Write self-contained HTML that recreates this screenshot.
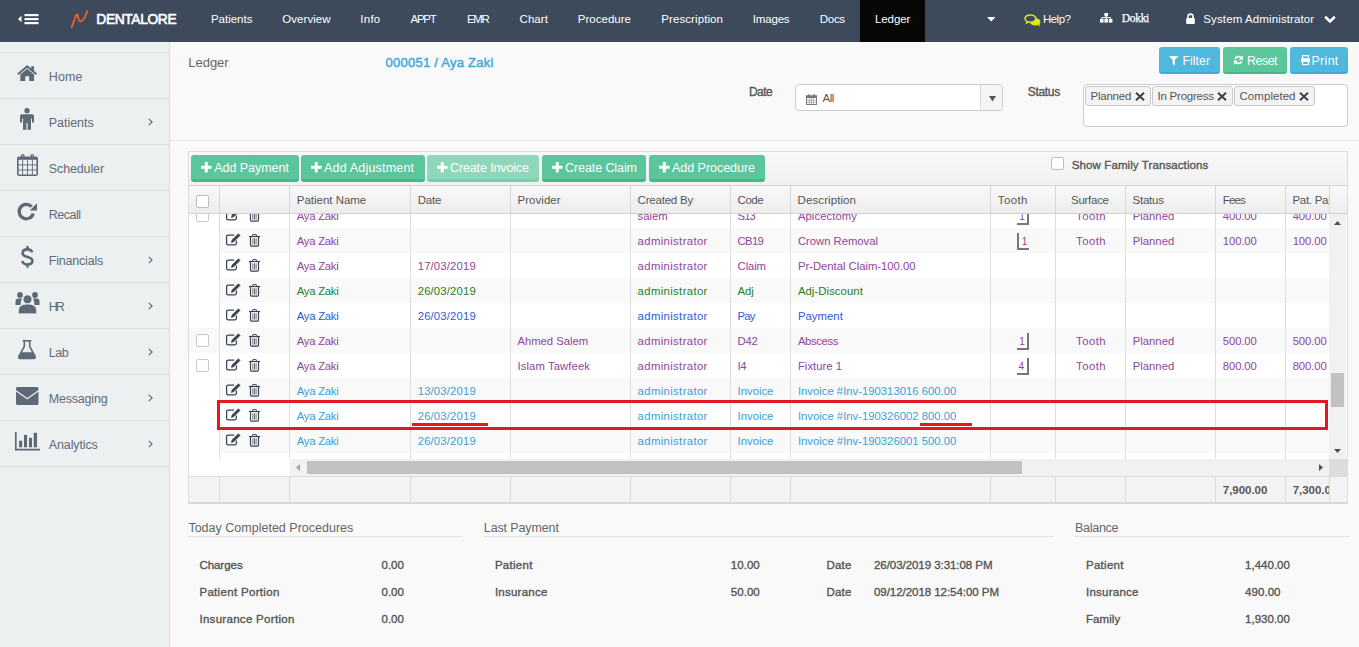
<!DOCTYPE html>
<html><head><meta charset="utf-8"><title>Ledger</title><style>
*{box-sizing:border-box;margin:0;padding:0}
html,body{width:1359px;height:647px;overflow:hidden;background:#f9f9f9;font-family:"Liberation Sans",sans-serif;font-size:12px;color:#555;position:relative}
.a{position:absolute}
.t{position:absolute;white-space:nowrap;line-height:normal}
svg{position:absolute;overflow:visible}
</style></head><body>
<div class="a" style="left:0;top:0;width:1359px;height:42px;background:#3d4a5c"></div>
<div class="a" style="left:860px;top:0;width:65px;height:42px;background:#070707"></div>
<svg style="left:18px;top:13px" width="21" height="12" viewBox="0 0 21 12">
<path d="M0 6 L3.5 2.8 L3.5 9.2 Z" fill="#fff"/>
<rect x="6.5" y="1" width="14" height="2.2" fill="#fff"/><rect x="6.5" y="5" width="14" height="2.2" fill="#fff"/><rect x="6.5" y="9" width="14" height="2.2" fill="#fff"/></svg>
<svg style="left:70px;top:10px" width="19" height="18" viewBox="0 0 19 18">
<path d="M1.8 17 L5.6 6.2 Q7 2.6 7.9 6 L8.6 9.2 Q9.6 12.4 12.2 10.8 Q14.6 9 17.2 1.2" stroke="#ef5f28" stroke-width="1.9" fill="none" stroke-linecap="round" stroke-linejoin="round"/></svg>
<div class="t" style="left:96.30px;top:12px;font-size:13.8px;color:#fff;letter-spacing:-0.369px;-webkit-text-stroke:0.6px #fff">DENTALORE</div>
<div class="t" style="left:210.90px;top:13px;font-size:11.5px;color:#fff;letter-spacing:-0.007px">Patients</div>
<div class="t" style="left:282.30px;top:13px;font-size:11.5px;color:#fff;letter-spacing:0.050px">Overview</div>
<div class="t" style="left:360.20px;top:13px;font-size:11.5px;color:#fff;letter-spacing:0.300px">Info</div>
<div class="t" style="left:410.50px;top:13px;font-size:11.5px;color:#fff;letter-spacing:-1.283px">APPT</div>
<div class="t" style="left:466.90px;top:13px;font-size:11.5px;color:#fff;letter-spacing:-1.375px">EMR</div>
<div class="t" style="left:519.50px;top:13px;font-size:11.5px;color:#fff;letter-spacing:0.075px">Chart</div>
<div class="t" style="left:577.70px;top:13px;font-size:11.5px;color:#fff;letter-spacing:0.031px">Procedure</div>
<div class="t" style="left:661.20px;top:13px;font-size:11.5px;color:#fff;letter-spacing:0.100px">Prescription</div>
<div class="t" style="left:752.80px;top:13px;font-size:11.5px;color:#fff;letter-spacing:-0.180px">Images</div>
<div class="t" style="left:819.80px;top:13px;font-size:11.5px;color:#fff;letter-spacing:-0.300px">Docs</div>
<div class="t" style="left:875.00px;top:13px;font-size:11.5px;color:#fff;letter-spacing:-0.100px">Ledger</div>
<div class="t" style="left:1042.90px;top:13px;font-size:11.5px;color:#fff;letter-spacing:-0.487px">Help?</div>
<div class="t" style="left:1203.30px;top:13px;font-size:11.5px;color:#fff;letter-spacing:0.118px">System Administrator</div>
<div class="t" style="left:1121.70px;top:12px;font-size:11.5px;color:#fff;letter-spacing:-0.287px;font-family:'Liberation Serif',serif;-webkit-text-stroke:0.25px #fff">Dokki</div>
<svg style="left:987px;top:17px" width="9" height="5" viewBox="0 0 9 5"><path d="M0 0 H8.5 L4.25 4.5Z" fill="#fff"/></svg>
<svg style="left:1024px;top:13.5px" width="17" height="13" viewBox="0 0 17 13">
<ellipse cx="11.2" cy="7.9" rx="5.2" ry="3.7" fill="#e5e619"/>
<path d="M12.5 10.5 L16 12.6 L15 9.8Z" fill="#e5e619"/>
<ellipse cx="6.4" cy="4.6" rx="5.4" ry="3.7" fill="#3d4a5c" stroke="#e5e619" stroke-width="1.5"/>
<path d="M2.6 7.4 L1.3 10.2 L5.3 8.4Z" fill="#e5e619"/></svg>
<svg style="left:1100.4px;top:13px" width="12.4" height="9.6" viewBox="0 0 12.4 9.6">
<rect x="4.4" y="0" width="3.6" height="3.3" fill="#fff"/><rect x="0" y="6" width="3.6" height="3.6" fill="#fff"/><rect x="4.4" y="6" width="3.6" height="3.6" fill="#fff"/><rect x="8.8" y="6" width="3.6" height="3.6" fill="#fff"/>
<path d="M1.8 6.2 V4.6 H10.6 V6.2 M6.2 3 V6.2" stroke="#fff" stroke-width="1" fill="none"/></svg>
<svg style="left:1186px;top:13px" width="9" height="11" viewBox="0 0 9 11">
<path d="M2 5.2 V3.6 A2.5 2.5 0 0 1 7 3.6 V5.2" stroke="#fff" stroke-width="1.6" fill="none"/><rect x="0.2" y="5" width="8.6" height="6" rx="0.8" fill="#fff"/></svg>
<svg style="left:1324px;top:15px" width="12" height="9" viewBox="0 0 12 9"><path d="M1.2 1.8 L6 6.4 L10.8 1.8" stroke="#fff" stroke-width="2.6" fill="none"/></svg>
<div class="a" style="left:0;top:42px;width:170px;height:605px;background:#ecf0f1;border-right:1px solid #dcdfe0"></div>
<div class="a" style="left:0;top:52px;width:169px;height:1px;background:#dce0e1"></div>
<div class="a" style="left:0;top:98px;width:169px;height:1px;background:#dce0e1"></div>
<div class="a" style="left:0;top:144px;width:169px;height:1px;background:#dce0e1"></div>
<div class="a" style="left:0;top:190px;width:169px;height:1px;background:#dce0e1"></div>
<div class="a" style="left:0;top:236px;width:169px;height:1px;background:#dce0e1"></div>
<div class="a" style="left:0;top:282px;width:169px;height:1px;background:#dce0e1"></div>
<div class="a" style="left:0;top:328px;width:169px;height:1px;background:#dce0e1"></div>
<div class="a" style="left:0;top:374px;width:169px;height:1px;background:#dce0e1"></div>
<div class="a" style="left:0;top:420px;width:169px;height:1px;background:#dce0e1"></div>
<div class="a" style="left:0;top:466px;width:169px;height:1px;background:#dce0e1"></div>
<div class="t" style="left:48.80px;top:70px;font-size:12.5px;color:#5f6b77;letter-spacing:0.082px">Home</div>
<div class="t" style="left:48.80px;top:116px;font-size:12.5px;color:#5f6b77;letter-spacing:-0.046px">Patients</div>
<svg style="left:148px;top:118px" width="5" height="8" viewBox="0 0 5 8"><path d="M0.8 0.8 L4 4 L0.8 7.2" stroke="#5f6b77" stroke-width="1.2" fill="none"/></svg>
<div class="t" style="left:48.80px;top:162px;font-size:12.5px;color:#5f6b77;letter-spacing:-0.129px">Scheduler</div>
<div class="t" style="left:48.80px;top:208px;font-size:12.5px;color:#5f6b77;letter-spacing:-0.509px">Recall</div>
<div class="t" style="left:48.80px;top:254px;font-size:12.5px;color:#5f6b77;letter-spacing:-0.204px">Financials</div>
<svg style="left:148px;top:256px" width="5" height="8" viewBox="0 0 5 8"><path d="M0.8 0.8 L4 4 L0.8 7.2" stroke="#5f6b77" stroke-width="1.2" fill="none"/></svg>
<div class="t" style="left:48.80px;top:300px;font-size:12.5px;color:#5f6b77;letter-spacing:-2.179px">HR</div>
<svg style="left:148px;top:302px" width="5" height="8" viewBox="0 0 5 8"><path d="M0.8 0.8 L4 4 L0.8 7.2" stroke="#5f6b77" stroke-width="1.2" fill="none"/></svg>
<div class="t" style="left:48.80px;top:346px;font-size:12.5px;color:#5f6b77;letter-spacing:-0.497px">Lab</div>
<svg style="left:148px;top:348px" width="5" height="8" viewBox="0 0 5 8"><path d="M0.8 0.8 L4 4 L0.8 7.2" stroke="#5f6b77" stroke-width="1.2" fill="none"/></svg>
<div class="t" style="left:48.80px;top:392px;font-size:12.5px;color:#5f6b77;letter-spacing:-0.201px">Messaging</div>
<svg style="left:148px;top:394px" width="5" height="8" viewBox="0 0 5 8"><path d="M0.8 0.8 L4 4 L0.8 7.2" stroke="#5f6b77" stroke-width="1.2" fill="none"/></svg>
<div class="t" style="left:48.80px;top:438px;font-size:12.5px;color:#5f6b77;letter-spacing:-0.125px">Analytics</div>
<svg style="left:148px;top:440px" width="5" height="8" viewBox="0 0 5 8"><path d="M0.8 0.8 L4 4 L0.8 7.2" stroke="#5f6b77" stroke-width="1.2" fill="none"/></svg>
<svg style="left:17px;top:65px" width="21" height="17" viewBox="0 0 21 17"><path d="M0.9 9.2 L10.2 1.4 L19.5 9.2" stroke="#5d6977" stroke-width="2" fill="none"/><path d="M3.3 9.4 L10.2 3.7 L17.1 9.4 V16 H12.2 V11.2 H8.2 V16 H3.3 Z" fill="#5d6977"/><rect x="14.2" y="1.2" width="2.8" height="5" fill="#5d6977"/></svg>
<svg style="left:20px;top:108px" width="14" height="22" viewBox="0 0 14 22"><circle cx="7" cy="2.7" r="2.6" fill="#5d6977"/><path d="M1.6 6.2 H12.4 A1.6 1.6 0 0 1 14 7.8 V14.5 H12 V10.5 H11 V21.8 H7.6 V15 H6.4 V21.8 H3 V10.5 H2 V14.5 H0 V7.8 A1.6 1.6 0 0 1 1.6 6.2Z" fill="#5d6977"/></svg>
<svg style="left:17px;top:154px" width="21" height="22" viewBox="0 0 21 22"><rect x="0.8" y="3.2" width="19.4" height="18" rx="1.4" fill="none" stroke="#5d6977" stroke-width="1.6"/><rect x="0.8" y="3.2" width="19.4" height="2.6" fill="#5d6977"/><path d="M4.6 4.5 V1.8 A1.2 1.2 0 0 1 7 1.8 V4.5 M14 4.5 V1.8 A1.2 1.2 0 0 1 16.4 1.8 V4.5" stroke="#5d6977" stroke-width="1.3" fill="none"/><path d="M5.6 6 V21 M10.5 6 V21 M15.4 6 V21 M1 10.9 H20 M1 16 H20" stroke="#5d6977" stroke-width="0.9"/></svg>
<svg style="left:17px;top:202px" width="20" height="19" viewBox="0 0 20 19"><path d="M16.3 11.5 A7.2 7.2 0 1 1 14.6 4.6" stroke="#5d6977" stroke-width="3.2" fill="none"/><path d="M20 1.2 V8.6 H12.6 Z" fill="#5d6977"/></svg>
<svg style="left:21px;top:246px" width="13" height="22" viewBox="0 0 13 22"><path d="M11.2 6.4 C10.5 4.4 8.8 3.4 6.5 3.4 C3.5 3.4 1.6 5 1.6 7.3 C1.6 12 11.4 10.2 11.4 14.8 C11.4 17 9.5 18.5 6.5 18.5 C3.5 18.5 1.8 17.1 1.2 15" stroke="#5d6977" stroke-width="2.6" fill="none"/><rect x="5.3" y="0" width="2.4" height="4" fill="#5d6977"/><rect x="5.3" y="17.6" width="2.4" height="4" fill="#5d6977"/></svg>
<svg style="left:15px;top:292px" width="25" height="22" viewBox="0 0 25 22"><circle cx="5" cy="3" r="2.9" fill="#5d6977"/><circle cx="20" cy="3" r="2.9" fill="#5d6977"/><path d="M0.5 13 V9.6 Q0.5 6.6 3.5 6.6 H7.2 Q5.2 8.6 5.6 13 Z" fill="#5d6977"/><path d="M24.5 13 V9.6 Q24.5 6.6 21.5 6.6 H17.8 Q19.8 8.6 19.4 13 Z" fill="#5d6977"/><circle cx="12.5" cy="7.3" r="4.4" fill="#5d6977" stroke="#ecf0f1" stroke-width="0.7"/><path d="M3.5 21.2 V18.5 Q3.5 12 12.5 12 Q21.5 12 21.5 18.5 V21.2 Q21.5 21.8 20.9 21.8 H4.1 Q3.5 21.8 3.5 21.2Z" fill="#5d6977" stroke="#ecf0f1" stroke-width="0.7"/></svg>
<svg style="left:18px;top:340px" width="18" height="19" viewBox="0 0 18 19"><rect x="4.7" y="0" width="8.6" height="1.6" fill="#5d6977"/><path d="M6.3 1 V6.5 L0.9 16.4 Q0.2 18.4 2.2 18.4 H15.8 Q17.8 18.4 17.1 16.4 L11.7 6.5 V1" stroke="#5d6977" stroke-width="1.6" fill="none"/><path d="M3.3 12.2 H14.7 L17.1 16.6 Q17.6 18.4 15.8 18.4 H2.2 Q0.4 18.4 0.9 16.6 Z" fill="#5d6977"/></svg>
<svg style="left:15.7px;top:386.8px" width="22.5" height="18" viewBox="0 0 22.5 18"><path d="M0 1.5 A1.5 1.5 0 0 1 1.5 0 H21 A1.5 1.5 0 0 1 22.5 1.5 V2.9 L11.25 11 L0 2.9 Z" fill="#5d6977"/><path d="M0 4.5 L11.25 12.6 L22.5 4.5 V16.5 A1.5 1.5 0 0 1 21 18 H1.5 A1.5 1.5 0 0 1 0 16.5 Z" fill="#5d6977"/></svg>
<svg style="left:15px;top:432px" width="26" height="19" viewBox="0 0 26 19"><path d="M0.8 0 V17.6 H25" stroke="#5d6977" stroke-width="1.7" fill="none"/><rect x="4.1" y="8.7" width="3.1" height="6.6" fill="#5d6977"/><rect x="9" y="2.9" width="3.1" height="12.4" fill="#5d6977"/><rect x="14" y="5.8" width="3" height="9.5" fill="#5d6977"/><rect x="18.7" y="0.8" width="3.3" height="14.5" fill="#5d6977"/></svg>
<div class="t" style="left:188.20px;top:55px;font-size:13px;color:#666;letter-spacing:0.000px">Ledger</div>
<div class="t" style="left:385.50px;top:55px;font-size:13px;color:#3daad9;letter-spacing:0.247px;-webkit-text-stroke:0.45px #3daad9">000051 / Aya Zaki</div>
<div class="a" style="left:1159px;top:47px;width:61px;height:27px;background:#4fb8dc;border-bottom:2px solid #3aaed6;border-radius:3px"></div>
<div class="a" style="left:1223px;top:47px;width:64px;height:27px;background:#5bc69b;border-bottom:2px solid #43b987;border-radius:3px"></div>
<div class="a" style="left:1290px;top:47px;width:58px;height:27px;background:#4fb8dc;border-bottom:2px solid #3aaed6;border-radius:3px"></div>
<svg style="left:1169.3px;top:55.5px" width="9.5" height="9.5" viewBox="0 0 11 11"><path d="M0 0 H11 L6.8 4.6 V11 L4.2 9.2 V4.6 Z" fill="#fff"/></svg>
<div class="t" style="left:1182.50px;top:54px;font-size:12.3px;color:#fff;letter-spacing:0.030px">Filter</div>
<svg style="left:1232.7px;top:55.3px" width="10.8" height="9.8" viewBox="0 0 11 11.5"><path d="M9.3 4.2 A4.3 4.3 0 0 0 1.6 4.6" stroke="#fff" stroke-width="2" fill="none"/><path d="M1.7 7.8 A4.3 4.3 0 0 0 9.4 7.4" stroke="#fff" stroke-width="2" fill="none"/><path d="M10.8 0.5 V5.5 H5.8Z" fill="#fff"/><path d="M0.2 11.5 V6.5 H5.2Z" fill="#fff"/></svg>
<div class="t" style="left:1247.00px;top:54px;font-size:12.3px;color:#fff;letter-spacing:-0.412px">Reset</div>
<svg style="left:1300px;top:54.8px" width="11" height="10" viewBox="0 0 12 12"><path d="M2.5 4 V0.8 H9.5 V4" stroke="#fff" stroke-width="1.5" fill="none"/><rect x="0.5" y="4" width="11" height="5" rx="1.2" fill="#fff"/><rect x="2.6" y="7.5" width="6.8" height="4" fill="#4fb8dc" stroke="#fff" stroke-width="1.4"/></svg>
<div class="t" style="left:1311.50px;top:54px;font-size:12.3px;color:#fff;letter-spacing:0.375px">Print</div>
<div class="t" style="left:748.90px;top:85px;font-size:12px;color:#555;letter-spacing:-0.483px;-webkit-text-stroke:0.35px #555">Date</div>
<div class="a" style="left:795px;top:84px;width:208px;height:27px;background:#fff;border:1px solid #ccc;border-radius:4px"></div>
<div class="a" style="left:980px;top:85px;width:22px;height:25px;background:#f5f5f5;border-left:1px solid #dadada;border-radius:0 3px 3px 0"></div>
<svg style="left:989px;top:96px" width="7" height="6" viewBox="0 0 7 6"><path d="M0 0 H7 L3.5 5.5Z" fill="#555"/></svg>
<svg style="left:806px;top:94px" width="11" height="11" viewBox="0 0 11 11"><rect x="0.5" y="1.8" width="10" height="8.7" fill="none" stroke="#777" stroke-width="1"/><rect x="0.5" y="1.8" width="10" height="2.2" fill="#777"/><path d="M2.8 0 V3 M8.2 0 V3" stroke="#777" stroke-width="1.2"/><path d="M3.5 4 V10.5 M5.5 4 V10.5 M7.5 4 V10.5 M0.5 6.2 H10.5 M0.5 8.3 H10.5" stroke="#999" stroke-width="0.7"/></svg>
<div class="t" style="left:822.50px;top:92px;font-size:11.5px;color:#555;letter-spacing:-0.450px">All</div>
<div class="t" style="left:1027.70px;top:85px;font-size:12px;color:#555;letter-spacing:-0.300px;-webkit-text-stroke:0.35px #555">Status</div>
<div class="a" style="left:1083px;top:84px;width:265px;height:43px;background:#fff;border:1px solid #ccc;border-radius:4px"></div>
<div class="a" style="left:1085px;top:86px;width:66px;height:20px;background:#f3f3f3;border:1px solid #c9c9c9;border-radius:3px"></div>
<div class="t" style="left:1090.60px;top:90px;font-size:11.5px;color:#555;letter-spacing:-0.250px">Planned</div>
<svg style="left:1134.8px;top:92px" width="10" height="9" viewBox="0 0 10 9"><path d="M1 0.8 L9 8.2 M9 0.8 L1 8.2" stroke="#3a3f48" stroke-width="2"/></svg>
<div class="a" style="left:1152px;top:86px;width:81px;height:20px;background:#f3f3f3;border:1px solid #c9c9c9;border-radius:3px"></div>
<div class="t" style="left:1157.50px;top:90px;font-size:11.5px;color:#555;letter-spacing:-0.230px">In Progress</div>
<svg style="left:1216.5px;top:92px" width="10" height="9" viewBox="0 0 10 9"><path d="M1 0.8 L9 8.2 M9 0.8 L1 8.2" stroke="#3a3f48" stroke-width="2"/></svg>
<div class="a" style="left:1234px;top:86px;width:81px;height:20px;background:#f3f3f3;border:1px solid #c9c9c9;border-radius:3px"></div>
<div class="t" style="left:1239.50px;top:90px;font-size:11.5px;color:#555;letter-spacing:0.050px">Completed</div>
<svg style="left:1298.5px;top:92px" width="10" height="9" viewBox="0 0 10 9"><path d="M1 0.8 L9 8.2 M9 0.8 L1 8.2" stroke="#3a3f48" stroke-width="2"/></svg>
<div class="a" style="left:170px;top:140px;width:1189px;height:1px;background:#e6e6e6"></div>
<div class="a" style="left:188px;top:151px;width:1160px;height:353px;background:#fff;border:1px solid #dcdcdc;border-bottom:2px solid #d8d8d8"></div>
<div class="a" style="left:189px;top:152px;width:1158px;height:33px;background:linear-gradient(#f8f8f8,#f1f1f1)"></div>
<div class="a" style="left:189px;top:185px;width:1158px;height:1px;background:#d4d4d4"></div>
<div class="a" style="left:191px;top:155px;width:108px;height:27px;background:#5bc69b;border-bottom:3px solid #43b987;border-radius:3px"></div>
<svg style="left:201.3px;top:162px" width="10.5" height="10.5" viewBox="0 0 10.5 10.5"><path d="M5.25 0 V10.5 M0 5.25 H10.5" stroke="#fff" stroke-width="3"/></svg>
<div class="t" style="left:214.30px;top:161px;font-size:12.5px;color:#fff;letter-spacing:-0.055px">Add Payment</div>
<div class="a" style="left:301px;top:155px;width:124px;height:27px;background:#5bc69b;border-bottom:3px solid #43b987;border-radius:3px"></div>
<svg style="left:311.0px;top:162px" width="10.5" height="10.5" viewBox="0 0 10.5 10.5"><path d="M5.25 0 V10.5 M0 5.25 H10.5" stroke="#fff" stroke-width="3"/></svg>
<div class="t" style="left:324.00px;top:161px;font-size:12.5px;color:#fff;letter-spacing:0.188px">Add Adjustment</div>
<div class="a" style="left:427px;top:155px;width:112px;height:27px;background:#8fd7ba;border-bottom:3px solid #7ccfac;border-radius:3px"></div>
<svg style="left:437.0px;top:162px" width="10.5" height="10.5" viewBox="0 0 10.5 10.5"><path d="M5.25 0 V10.5 M0 5.25 H10.5" stroke="#fff" stroke-width="3"/></svg>
<div class="t" style="left:450.00px;top:161px;font-size:12.5px;color:#fff;letter-spacing:-0.123px">Create Invoice</div>
<div class="a" style="left:542px;top:155px;width:104px;height:27px;background:#5bc69b;border-bottom:3px solid #43b987;border-radius:3px"></div>
<svg style="left:552.0px;top:162px" width="10.5" height="10.5" viewBox="0 0 10.5 10.5"><path d="M5.25 0 V10.5 M0 5.25 H10.5" stroke="#fff" stroke-width="3"/></svg>
<div class="t" style="left:565.00px;top:161px;font-size:12.5px;color:#fff;letter-spacing:-0.086px">Create Claim</div>
<div class="a" style="left:649px;top:155px;width:116px;height:27px;background:#5bc69b;border-bottom:3px solid #43b987;border-radius:3px"></div>
<svg style="left:659.0px;top:162px" width="10.5" height="10.5" viewBox="0 0 10.5 10.5"><path d="M5.25 0 V10.5 M0 5.25 H10.5" stroke="#fff" stroke-width="3"/></svg>
<div class="t" style="left:672.00px;top:161px;font-size:12.5px;color:#fff;letter-spacing:-0.033px">Add Procedure</div>
<div class="a" style="left:1051px;top:157px;width:13px;height:13px;background:#fff;border:1px solid #bdbdbd;border-radius:2px"></div>
<div class="t" style="left:1071.80px;top:159px;font-size:11.5px;color:#555;letter-spacing:0.100px;-webkit-text-stroke:0.35px #555">Show Family Transactions</div>
<div class="a" style="left:189px;top:186px;width:1158px;height:27px;background:linear-gradient(#f9f9f9,#ededed)"></div>
<div class="a" style="left:189px;top:213px;width:1158px;height:1px;background:#d0d0d0"></div>
<div class="a" style="left:219px;top:186px;width:1px;height:27px;background:#d6d6d6"></div>
<div class="a" style="left:289px;top:186px;width:1px;height:27px;background:#d6d6d6"></div>
<div class="a" style="left:410px;top:186px;width:1px;height:27px;background:#d6d6d6"></div>
<div class="a" style="left:510px;top:186px;width:1px;height:27px;background:#d6d6d6"></div>
<div class="a" style="left:630px;top:186px;width:1px;height:27px;background:#d6d6d6"></div>
<div class="a" style="left:730px;top:186px;width:1px;height:27px;background:#d6d6d6"></div>
<div class="a" style="left:790px;top:186px;width:1px;height:27px;background:#d6d6d6"></div>
<div class="a" style="left:990px;top:186px;width:1px;height:27px;background:#d6d6d6"></div>
<div class="a" style="left:1055px;top:186px;width:1px;height:27px;background:#d6d6d6"></div>
<div class="a" style="left:1125px;top:186px;width:1px;height:27px;background:#d6d6d6"></div>
<div class="a" style="left:1215px;top:186px;width:1px;height:27px;background:#d6d6d6"></div>
<div class="a" style="left:1285px;top:186px;width:1px;height:27px;background:#d6d6d6"></div>
<div class="a" style="left:1329px;top:186px;width:1px;height:27px;background:#d6d6d6"></div>
<div class="a" style="left:196px;top:195px;width:13px;height:13px;background:#fff;border:1px solid #bdbdbd;border-radius:2px"></div>
<div class="t" style="left:296.80px;top:194px;font-size:11.5px;color:#555;letter-spacing:-0.020px">Patient Name</div>
<div class="t" style="left:417.70px;top:194px;font-size:11.5px;color:#555;letter-spacing:-0.170px">Date</div>
<div class="t" style="left:517.50px;top:194px;font-size:11.5px;color:#555;letter-spacing:0.036px">Provider</div>
<div class="t" style="left:637.60px;top:194px;font-size:11.5px;color:#555;letter-spacing:-0.214px">Created By</div>
<div class="t" style="left:737.60px;top:194px;font-size:11.5px;color:#555;letter-spacing:-0.468px">Code</div>
<div class="t" style="left:797.60px;top:194px;font-size:11.5px;color:#555;letter-spacing:0.085px">Description</div>
<div class="t" style="left:997.80px;top:194px;font-size:11.5px;color:#555;letter-spacing:0.370px">Tooth</div>
<div class="t" style="left:1071.00px;top:194px;font-size:11.5px;color:#555;letter-spacing:-0.271px">Surface</div>
<div class="t" style="left:1132.50px;top:194px;font-size:11.5px;color:#555;letter-spacing:-0.237px">Status</div>
<div class="t" style="left:1222.80px;top:194px;font-size:11.5px;color:#555;letter-spacing:-0.894px">Fees</div>
<div class="a" style="left:1286px;top:186px;width:43px;height:27px;overflow:hidden"><div class="t" style="left:6.50px;top:8px;font-size:11.5px;color:#555;letter-spacing:-0.297px">Pat. Paid</div>
</div>
<div class="a" style="left:189px;top:214px;width:1140px;height:245px;overflow:hidden;background:#fff">
<div class="t" style="left:107.80px;top:-4px;font-size:11.3px;color:#91469a;letter-spacing:-0.253px">Aya Zaki</div>
<div class="t" style="left:448.60px;top:-4px;font-size:11.3px;color:#91469a;letter-spacing:0.000px">salem</div>
<div class="t" style="left:548.60px;top:-4px;font-size:11.3px;color:#91469a;letter-spacing:-0.996px">S13</div>
<div class="t" style="left:608.90px;top:-4px;font-size:11.3px;color:#91469a;letter-spacing:0.068px">Apicectomy</div>
<div class="t" style="left:887.00px;top:-4px;font-size:11.3px;color:#91469a;letter-spacing:0.495px">Tooth</div>
<div class="t" style="left:943.70px;top:-4px;font-size:11.3px;color:#91469a;letter-spacing:0.015px">Planned</div>
<div class="t" style="left:1033.80px;top:-4px;font-size:11.3px;color:#91469a;letter-spacing:-0.115px">400.00</div>
<div class="t" style="left:1103.70px;top:-4px;font-size:11.3px;color:#91469a;letter-spacing:-0.115px">400.00</div>
<div class="a" style="left:838px;top:-6px;width:2px;height:17px;background:#777"></div>
<div class="a" style="left:828px;top:9px;width:12px;height:2px;background:#777"></div>
<div class="t" style="left:830.30px;top:-3px;font-size:10px;color:#91469a;letter-spacing:0.000px">1</div>
<svg style="left:37px;top:-6.3px" width="15" height="13" viewBox="0 0 15 13"><path d="M8.2 2 H2.2 A1.6 1.6 0 0 0 0.6 3.6 V10.2 A1.6 1.6 0 0 0 2.2 11.8 H8.8 A1.6 1.6 0 0 0 10.4 10.2 V7.6" stroke="#3b4350" stroke-width="1.25" fill="none"/><path d="M12.4 0.7 L14.1 2.4 L7.7 8.8 L5.4 9.5 L6 7.1 Z" fill="#3b4350" stroke="#3b4350" stroke-width="0.6" stroke-linejoin="round"/></svg>
<svg style="left:60.099999999999994px;top:-5.3px" width="11" height="13" viewBox="0 0 11 13"><path d="M0 2.5 H11" stroke="#3b4350" stroke-width="1.2"/><path d="M3.6 2.2 V1.1 Q3.6 0.5 4.2 0.5 H6.8 Q7.4 0.5 7.4 1.1 V2.2" stroke="#3b4350" stroke-width="1" fill="none"/><path d="M1.5 2.8 V11.1 A1 1 0 0 0 2.5 12.1 H8.5 A1 1 0 0 0 9.5 11.1 V2.8" stroke="#3b4350" stroke-width="1.2" fill="none"/><path d="M3.9 4.3 V10.6 M5.5 4.3 V10.6 M7.1 4.3 V10.6" stroke="#3b4350" stroke-width="0.75"/></svg>
<div class="a" style="left:7px;top:-5px;width:13px;height:13px;background:#fff;border:1px solid #c8c8c8;border-radius:2px"></div>
<div class="a" style="left:31px;top:14px;width:1109px;height:25px;background:#f9f9f9"></div>
<div class="t" style="left:107.80px;top:21px;font-size:11.3px;color:#91469a;letter-spacing:-0.253px">Aya Zaki</div>
<div class="t" style="left:448.60px;top:21px;font-size:11.3px;color:#91469a;letter-spacing:0.372px">administrator</div>
<div class="t" style="left:548.60px;top:21px;font-size:11.3px;color:#91469a;letter-spacing:-0.668px">CB19</div>
<div class="t" style="left:608.90px;top:21px;font-size:11.3px;color:#91469a;letter-spacing:-0.025px">Crown Removal</div>
<div class="t" style="left:887.00px;top:21px;font-size:11.3px;color:#91469a;letter-spacing:0.495px">Tooth</div>
<div class="t" style="left:943.70px;top:21px;font-size:11.3px;color:#91469a;letter-spacing:0.015px">Planned</div>
<div class="t" style="left:1033.80px;top:21px;font-size:11.3px;color:#91469a;letter-spacing:-0.115px">100.00</div>
<div class="t" style="left:1103.70px;top:21px;font-size:11.3px;color:#91469a;letter-spacing:-0.115px">100.00</div>
<div class="a" style="left:828px;top:19px;width:2px;height:17px;background:#777"></div>
<div class="a" style="left:828px;top:34px;width:12px;height:2px;background:#777"></div>
<div class="t" style="left:832.80px;top:22px;font-size:10px;color:#91469a;letter-spacing:0.000px">1</div>
<svg style="left:37px;top:18.7px" width="15" height="13" viewBox="0 0 15 13"><path d="M8.2 2 H2.2 A1.6 1.6 0 0 0 0.6 3.6 V10.2 A1.6 1.6 0 0 0 2.2 11.8 H8.8 A1.6 1.6 0 0 0 10.4 10.2 V7.6" stroke="#3b4350" stroke-width="1.25" fill="none"/><path d="M12.4 0.7 L14.1 2.4 L7.7 8.8 L5.4 9.5 L6 7.1 Z" fill="#3b4350" stroke="#3b4350" stroke-width="0.6" stroke-linejoin="round"/></svg>
<svg style="left:60.099999999999994px;top:19.7px" width="11" height="13" viewBox="0 0 11 13"><path d="M0 2.5 H11" stroke="#3b4350" stroke-width="1.2"/><path d="M3.6 2.2 V1.1 Q3.6 0.5 4.2 0.5 H6.8 Q7.4 0.5 7.4 1.1 V2.2" stroke="#3b4350" stroke-width="1" fill="none"/><path d="M1.5 2.8 V11.1 A1 1 0 0 0 2.5 12.1 H8.5 A1 1 0 0 0 9.5 11.1 V2.8" stroke="#3b4350" stroke-width="1.2" fill="none"/><path d="M3.9 4.3 V10.6 M5.5 4.3 V10.6 M7.1 4.3 V10.6" stroke="#3b4350" stroke-width="0.75"/></svg>
<div class="t" style="left:107.80px;top:46px;font-size:11.3px;color:#91469a;letter-spacing:-0.253px">Aya Zaki</div>
<div class="t" style="left:228.70px;top:46px;font-size:11.3px;color:#91469a;letter-spacing:0.161px">17/03/2019</div>
<div class="t" style="left:448.60px;top:46px;font-size:11.3px;color:#91469a;letter-spacing:0.372px">administrator</div>
<div class="t" style="left:548.60px;top:46px;font-size:11.3px;color:#91469a;letter-spacing:-0.112px">Claim</div>
<div class="t" style="left:608.90px;top:46px;font-size:11.3px;color:#91469a;letter-spacing:-0.021px">Pr-Dental Claim-100.00</div>
<svg style="left:37px;top:43.7px" width="15" height="13" viewBox="0 0 15 13"><path d="M8.2 2 H2.2 A1.6 1.6 0 0 0 0.6 3.6 V10.2 A1.6 1.6 0 0 0 2.2 11.8 H8.8 A1.6 1.6 0 0 0 10.4 10.2 V7.6" stroke="#3b4350" stroke-width="1.25" fill="none"/><path d="M12.4 0.7 L14.1 2.4 L7.7 8.8 L5.4 9.5 L6 7.1 Z" fill="#3b4350" stroke="#3b4350" stroke-width="0.6" stroke-linejoin="round"/></svg>
<svg style="left:60.099999999999994px;top:44.7px" width="11" height="13" viewBox="0 0 11 13"><path d="M0 2.5 H11" stroke="#3b4350" stroke-width="1.2"/><path d="M3.6 2.2 V1.1 Q3.6 0.5 4.2 0.5 H6.8 Q7.4 0.5 7.4 1.1 V2.2" stroke="#3b4350" stroke-width="1" fill="none"/><path d="M1.5 2.8 V11.1 A1 1 0 0 0 2.5 12.1 H8.5 A1 1 0 0 0 9.5 11.1 V2.8" stroke="#3b4350" stroke-width="1.2" fill="none"/><path d="M3.9 4.3 V10.6 M5.5 4.3 V10.6 M7.1 4.3 V10.6" stroke="#3b4350" stroke-width="0.75"/></svg>
<div class="a" style="left:31px;top:64px;width:1109px;height:25px;background:#f9f9f9"></div>
<div class="t" style="left:107.80px;top:71px;font-size:11.3px;color:#1f7f1f;letter-spacing:-0.253px">Aya Zaki</div>
<div class="t" style="left:228.70px;top:71px;font-size:11.3px;color:#1f7f1f;letter-spacing:0.161px">26/03/2019</div>
<div class="t" style="left:448.60px;top:71px;font-size:11.3px;color:#1f7f1f;letter-spacing:0.372px">administrator</div>
<div class="t" style="left:548.60px;top:71px;font-size:11.3px;color:#1f7f1f;letter-spacing:-0.133px">Adj</div>
<div class="t" style="left:608.90px;top:71px;font-size:11.3px;color:#1f7f1f;letter-spacing:0.081px">Adj-Discount</div>
<svg style="left:37px;top:68.7px" width="15" height="13" viewBox="0 0 15 13"><path d="M8.2 2 H2.2 A1.6 1.6 0 0 0 0.6 3.6 V10.2 A1.6 1.6 0 0 0 2.2 11.8 H8.8 A1.6 1.6 0 0 0 10.4 10.2 V7.6" stroke="#3b4350" stroke-width="1.25" fill="none"/><path d="M12.4 0.7 L14.1 2.4 L7.7 8.8 L5.4 9.5 L6 7.1 Z" fill="#3b4350" stroke="#3b4350" stroke-width="0.6" stroke-linejoin="round"/></svg>
<svg style="left:60.099999999999994px;top:69.7px" width="11" height="13" viewBox="0 0 11 13"><path d="M0 2.5 H11" stroke="#3b4350" stroke-width="1.2"/><path d="M3.6 2.2 V1.1 Q3.6 0.5 4.2 0.5 H6.8 Q7.4 0.5 7.4 1.1 V2.2" stroke="#3b4350" stroke-width="1" fill="none"/><path d="M1.5 2.8 V11.1 A1 1 0 0 0 2.5 12.1 H8.5 A1 1 0 0 0 9.5 11.1 V2.8" stroke="#3b4350" stroke-width="1.2" fill="none"/><path d="M3.9 4.3 V10.6 M5.5 4.3 V10.6 M7.1 4.3 V10.6" stroke="#3b4350" stroke-width="0.75"/></svg>
<div class="t" style="left:107.80px;top:96px;font-size:11.3px;color:#2f5bd5;letter-spacing:-0.253px">Aya Zaki</div>
<div class="t" style="left:228.70px;top:96px;font-size:11.3px;color:#2f5bd5;letter-spacing:0.161px">26/03/2019</div>
<div class="t" style="left:448.60px;top:96px;font-size:11.3px;color:#2f5bd5;letter-spacing:0.372px">administrator</div>
<div class="t" style="left:548.60px;top:96px;font-size:11.3px;color:#2f5bd5;letter-spacing:-0.794px">Pay</div>
<div class="t" style="left:608.90px;top:96px;font-size:11.3px;color:#2f5bd5;letter-spacing:0.050px">Payment</div>
<svg style="left:37px;top:93.7px" width="15" height="13" viewBox="0 0 15 13"><path d="M8.2 2 H2.2 A1.6 1.6 0 0 0 0.6 3.6 V10.2 A1.6 1.6 0 0 0 2.2 11.8 H8.8 A1.6 1.6 0 0 0 10.4 10.2 V7.6" stroke="#3b4350" stroke-width="1.25" fill="none"/><path d="M12.4 0.7 L14.1 2.4 L7.7 8.8 L5.4 9.5 L6 7.1 Z" fill="#3b4350" stroke="#3b4350" stroke-width="0.6" stroke-linejoin="round"/></svg>
<svg style="left:60.099999999999994px;top:94.7px" width="11" height="13" viewBox="0 0 11 13"><path d="M0 2.5 H11" stroke="#3b4350" stroke-width="1.2"/><path d="M3.6 2.2 V1.1 Q3.6 0.5 4.2 0.5 H6.8 Q7.4 0.5 7.4 1.1 V2.2" stroke="#3b4350" stroke-width="1" fill="none"/><path d="M1.5 2.8 V11.1 A1 1 0 0 0 2.5 12.1 H8.5 A1 1 0 0 0 9.5 11.1 V2.8" stroke="#3b4350" stroke-width="1.2" fill="none"/><path d="M3.9 4.3 V10.6 M5.5 4.3 V10.6 M7.1 4.3 V10.6" stroke="#3b4350" stroke-width="0.75"/></svg>
<div class="a" style="left:0px;top:114px;width:1140px;height:25px;background:#f9f9f9"></div>
<div class="t" style="left:107.80px;top:121px;font-size:11.3px;color:#91469a;letter-spacing:-0.253px">Aya Zaki</div>
<div class="t" style="left:328.50px;top:121px;font-size:11.3px;color:#91469a;letter-spacing:-0.040px">Ahmed Salem</div>
<div class="t" style="left:448.60px;top:121px;font-size:11.3px;color:#91469a;letter-spacing:0.372px">administrator</div>
<div class="t" style="left:548.60px;top:121px;font-size:11.3px;color:#91469a;letter-spacing:-0.276px">D42</div>
<div class="t" style="left:608.90px;top:121px;font-size:11.3px;color:#91469a;letter-spacing:-0.375px">Abscess</div>
<div class="t" style="left:887.00px;top:121px;font-size:11.3px;color:#91469a;letter-spacing:0.495px">Tooth</div>
<div class="t" style="left:943.70px;top:121px;font-size:11.3px;color:#91469a;letter-spacing:0.015px">Planned</div>
<div class="t" style="left:1033.80px;top:121px;font-size:11.3px;color:#91469a;letter-spacing:-0.115px">500.00</div>
<div class="t" style="left:1103.70px;top:121px;font-size:11.3px;color:#91469a;letter-spacing:-0.115px">500.00</div>
<div class="a" style="left:838px;top:119px;width:2px;height:17px;background:#777"></div>
<div class="a" style="left:828px;top:134px;width:12px;height:2px;background:#777"></div>
<div class="t" style="left:830.30px;top:122px;font-size:10px;color:#91469a;letter-spacing:0.000px">1</div>
<svg style="left:37px;top:118.7px" width="15" height="13" viewBox="0 0 15 13"><path d="M8.2 2 H2.2 A1.6 1.6 0 0 0 0.6 3.6 V10.2 A1.6 1.6 0 0 0 2.2 11.8 H8.8 A1.6 1.6 0 0 0 10.4 10.2 V7.6" stroke="#3b4350" stroke-width="1.25" fill="none"/><path d="M12.4 0.7 L14.1 2.4 L7.7 8.8 L5.4 9.5 L6 7.1 Z" fill="#3b4350" stroke="#3b4350" stroke-width="0.6" stroke-linejoin="round"/></svg>
<svg style="left:60.099999999999994px;top:119.7px" width="11" height="13" viewBox="0 0 11 13"><path d="M0 2.5 H11" stroke="#3b4350" stroke-width="1.2"/><path d="M3.6 2.2 V1.1 Q3.6 0.5 4.2 0.5 H6.8 Q7.4 0.5 7.4 1.1 V2.2" stroke="#3b4350" stroke-width="1" fill="none"/><path d="M1.5 2.8 V11.1 A1 1 0 0 0 2.5 12.1 H8.5 A1 1 0 0 0 9.5 11.1 V2.8" stroke="#3b4350" stroke-width="1.2" fill="none"/><path d="M3.9 4.3 V10.6 M5.5 4.3 V10.6 M7.1 4.3 V10.6" stroke="#3b4350" stroke-width="0.75"/></svg>
<div class="a" style="left:7px;top:120px;width:13px;height:13px;background:#fff;border:1px solid #c8c8c8;border-radius:2px"></div>
<div class="t" style="left:107.80px;top:146px;font-size:11.3px;color:#91469a;letter-spacing:-0.253px">Aya Zaki</div>
<div class="t" style="left:328.50px;top:146px;font-size:11.3px;color:#91469a;letter-spacing:0.090px">Islam Tawfeek</div>
<div class="t" style="left:448.60px;top:146px;font-size:11.3px;color:#91469a;letter-spacing:0.372px">administrator</div>
<div class="t" style="left:548.60px;top:146px;font-size:11.3px;color:#91469a;letter-spacing:-0.444px">I4</div>
<div class="t" style="left:608.90px;top:146px;font-size:11.3px;color:#91469a;letter-spacing:0.040px">Fixture 1</div>
<div class="t" style="left:887.00px;top:146px;font-size:11.3px;color:#91469a;letter-spacing:0.495px">Tooth</div>
<div class="t" style="left:943.70px;top:146px;font-size:11.3px;color:#91469a;letter-spacing:0.015px">Planned</div>
<div class="t" style="left:1033.80px;top:146px;font-size:11.3px;color:#91469a;letter-spacing:-0.115px">800.00</div>
<div class="t" style="left:1103.70px;top:146px;font-size:11.3px;color:#91469a;letter-spacing:-0.115px">800.00</div>
<div class="a" style="left:838px;top:144px;width:2px;height:17px;background:#777"></div>
<div class="a" style="left:828px;top:159px;width:12px;height:2px;background:#777"></div>
<div class="t" style="left:829.60px;top:147px;font-size:10px;color:#91469a;letter-spacing:0.000px">4</div>
<svg style="left:37px;top:143.7px" width="15" height="13" viewBox="0 0 15 13"><path d="M8.2 2 H2.2 A1.6 1.6 0 0 0 0.6 3.6 V10.2 A1.6 1.6 0 0 0 2.2 11.8 H8.8 A1.6 1.6 0 0 0 10.4 10.2 V7.6" stroke="#3b4350" stroke-width="1.25" fill="none"/><path d="M12.4 0.7 L14.1 2.4 L7.7 8.8 L5.4 9.5 L6 7.1 Z" fill="#3b4350" stroke="#3b4350" stroke-width="0.6" stroke-linejoin="round"/></svg>
<svg style="left:60.099999999999994px;top:144.7px" width="11" height="13" viewBox="0 0 11 13"><path d="M0 2.5 H11" stroke="#3b4350" stroke-width="1.2"/><path d="M3.6 2.2 V1.1 Q3.6 0.5 4.2 0.5 H6.8 Q7.4 0.5 7.4 1.1 V2.2" stroke="#3b4350" stroke-width="1" fill="none"/><path d="M1.5 2.8 V11.1 A1 1 0 0 0 2.5 12.1 H8.5 A1 1 0 0 0 9.5 11.1 V2.8" stroke="#3b4350" stroke-width="1.2" fill="none"/><path d="M3.9 4.3 V10.6 M5.5 4.3 V10.6 M7.1 4.3 V10.6" stroke="#3b4350" stroke-width="0.75"/></svg>
<div class="a" style="left:7px;top:145px;width:13px;height:13px;background:#fff;border:1px solid #c8c8c8;border-radius:2px"></div>
<div class="a" style="left:31px;top:164px;width:1109px;height:25px;background:#f9f9f9"></div>
<div class="t" style="left:107.80px;top:171px;font-size:11.3px;color:#3a9fd6;letter-spacing:-0.253px">Aya Zaki</div>
<div class="t" style="left:228.70px;top:171px;font-size:11.3px;color:#3a9fd6;letter-spacing:0.161px">13/03/2019</div>
<div class="t" style="left:448.60px;top:171px;font-size:11.3px;color:#3a9fd6;letter-spacing:0.372px">administrator</div>
<div class="t" style="left:548.60px;top:171px;font-size:11.3px;color:#3a9fd6;letter-spacing:-0.006px">Invoice</div>
<div class="t" style="left:608.90px;top:171px;font-size:11.3px;color:#3a9fd6;letter-spacing:0.003px">Invoice #Inv-190313016 600.00</div>
<svg style="left:37px;top:168.7px" width="15" height="13" viewBox="0 0 15 13"><path d="M8.2 2 H2.2 A1.6 1.6 0 0 0 0.6 3.6 V10.2 A1.6 1.6 0 0 0 2.2 11.8 H8.8 A1.6 1.6 0 0 0 10.4 10.2 V7.6" stroke="#3b4350" stroke-width="1.25" fill="none"/><path d="M12.4 0.7 L14.1 2.4 L7.7 8.8 L5.4 9.5 L6 7.1 Z" fill="#3b4350" stroke="#3b4350" stroke-width="0.6" stroke-linejoin="round"/></svg>
<svg style="left:60.099999999999994px;top:169.7px" width="11" height="13" viewBox="0 0 11 13"><path d="M0 2.5 H11" stroke="#3b4350" stroke-width="1.2"/><path d="M3.6 2.2 V1.1 Q3.6 0.5 4.2 0.5 H6.8 Q7.4 0.5 7.4 1.1 V2.2" stroke="#3b4350" stroke-width="1" fill="none"/><path d="M1.5 2.8 V11.1 A1 1 0 0 0 2.5 12.1 H8.5 A1 1 0 0 0 9.5 11.1 V2.8" stroke="#3b4350" stroke-width="1.2" fill="none"/><path d="M3.9 4.3 V10.6 M5.5 4.3 V10.6 M7.1 4.3 V10.6" stroke="#3b4350" stroke-width="0.75"/></svg>
<div class="t" style="left:107.80px;top:196px;font-size:11.3px;color:#3a9fd6;letter-spacing:-0.253px">Aya Zaki</div>
<div class="t" style="left:228.70px;top:196px;font-size:11.3px;color:#3a9fd6;letter-spacing:0.161px">26/03/2019</div>
<div class="t" style="left:448.60px;top:196px;font-size:11.3px;color:#3a9fd6;letter-spacing:0.372px">administrator</div>
<div class="t" style="left:548.60px;top:196px;font-size:11.3px;color:#3a9fd6;letter-spacing:-0.006px">Invoice</div>
<div class="t" style="left:608.90px;top:196px;font-size:11.3px;color:#3a9fd6;letter-spacing:0.003px">Invoice #Inv-190326002 800.00</div>
<svg style="left:37px;top:193.7px" width="15" height="13" viewBox="0 0 15 13"><path d="M8.2 2 H2.2 A1.6 1.6 0 0 0 0.6 3.6 V10.2 A1.6 1.6 0 0 0 2.2 11.8 H8.8 A1.6 1.6 0 0 0 10.4 10.2 V7.6" stroke="#3b4350" stroke-width="1.25" fill="none"/><path d="M12.4 0.7 L14.1 2.4 L7.7 8.8 L5.4 9.5 L6 7.1 Z" fill="#3b4350" stroke="#3b4350" stroke-width="0.6" stroke-linejoin="round"/></svg>
<svg style="left:60.099999999999994px;top:194.7px" width="11" height="13" viewBox="0 0 11 13"><path d="M0 2.5 H11" stroke="#3b4350" stroke-width="1.2"/><path d="M3.6 2.2 V1.1 Q3.6 0.5 4.2 0.5 H6.8 Q7.4 0.5 7.4 1.1 V2.2" stroke="#3b4350" stroke-width="1" fill="none"/><path d="M1.5 2.8 V11.1 A1 1 0 0 0 2.5 12.1 H8.5 A1 1 0 0 0 9.5 11.1 V2.8" stroke="#3b4350" stroke-width="1.2" fill="none"/><path d="M3.9 4.3 V10.6 M5.5 4.3 V10.6 M7.1 4.3 V10.6" stroke="#3b4350" stroke-width="0.75"/></svg>
<div class="a" style="left:31px;top:214px;width:1109px;height:25px;background:#f9f9f9"></div>
<div class="t" style="left:107.80px;top:221px;font-size:11.3px;color:#3a9fd6;letter-spacing:-0.253px">Aya Zaki</div>
<div class="t" style="left:228.70px;top:221px;font-size:11.3px;color:#3a9fd6;letter-spacing:0.161px">26/03/2019</div>
<div class="t" style="left:448.60px;top:221px;font-size:11.3px;color:#3a9fd6;letter-spacing:0.372px">administrator</div>
<div class="t" style="left:548.60px;top:221px;font-size:11.3px;color:#3a9fd6;letter-spacing:-0.006px">Invoice</div>
<div class="t" style="left:608.90px;top:221px;font-size:11.3px;color:#3a9fd6;letter-spacing:0.003px">Invoice #Inv-190326001 500.00</div>
<svg style="left:37px;top:218.7px" width="15" height="13" viewBox="0 0 15 13"><path d="M8.2 2 H2.2 A1.6 1.6 0 0 0 0.6 3.6 V10.2 A1.6 1.6 0 0 0 2.2 11.8 H8.8 A1.6 1.6 0 0 0 10.4 10.2 V7.6" stroke="#3b4350" stroke-width="1.25" fill="none"/><path d="M12.4 0.7 L14.1 2.4 L7.7 8.8 L5.4 9.5 L6 7.1 Z" fill="#3b4350" stroke="#3b4350" stroke-width="0.6" stroke-linejoin="round"/></svg>
<svg style="left:60.099999999999994px;top:219.7px" width="11" height="13" viewBox="0 0 11 13"><path d="M0 2.5 H11" stroke="#3b4350" stroke-width="1.2"/><path d="M3.6 2.2 V1.1 Q3.6 0.5 4.2 0.5 H6.8 Q7.4 0.5 7.4 1.1 V2.2" stroke="#3b4350" stroke-width="1" fill="none"/><path d="M1.5 2.8 V11.1 A1 1 0 0 0 2.5 12.1 H8.5 A1 1 0 0 0 9.5 11.1 V2.8" stroke="#3b4350" stroke-width="1.2" fill="none"/><path d="M3.9 4.3 V10.6 M5.5 4.3 V10.6 M7.1 4.3 V10.6" stroke="#3b4350" stroke-width="0.75"/></svg>
<div class="a" style="left:30px;top:0;width:1px;height:245px;background:#dedede"></div>
<div class="a" style="left:100px;top:0;width:1px;height:245px;background:#dedede"></div>
<div class="a" style="left:221px;top:0;width:1px;height:245px;background:#dedede"></div>
<div class="a" style="left:321px;top:0;width:1px;height:245px;background:#dedede"></div>
<div class="a" style="left:441px;top:0;width:1px;height:245px;background:#dedede"></div>
<div class="a" style="left:541px;top:0;width:1px;height:245px;background:#dedede"></div>
<div class="a" style="left:601px;top:0;width:1px;height:245px;background:#dedede"></div>
<div class="a" style="left:801px;top:0;width:1px;height:245px;background:#dedede"></div>
<div class="a" style="left:866px;top:0;width:1px;height:245px;background:#dedede"></div>
<div class="a" style="left:936px;top:0;width:1px;height:245px;background:#dedede"></div>
<div class="a" style="left:1026px;top:0;width:1px;height:245px;background:#dedede"></div>
<div class="a" style="left:1096px;top:0;width:1px;height:245px;background:#dedede"></div>
</div>
<div class="a" style="left:217px;top:400px;width:1111px;height:30px;border:3px solid #e8161e"></div>
<div class="a" style="left:412px;top:423px;width:76px;height:3px;background:#e8161e"></div>
<div class="a" style="left:920px;top:423px;width:52px;height:3px;background:#e8161e"></div>
<div class="a" style="left:1329px;top:214px;width:17px;height:245px;background:#f1f1f1"></div>
<svg style="left:1334px;top:221px" width="7" height="4" viewBox="0 0 7 4"><path d="M0 4 H7 L3.5 0Z" fill="#505050"/></svg>
<svg style="left:1334px;top:449px" width="7" height="4" viewBox="0 0 7 4"><path d="M0 0 H7 L3.5 4Z" fill="#505050"/></svg>
<div class="a" style="left:1331px;top:373px;width:13px;height:34px;background:#c1c1c1"></div>
<div class="a" style="left:189px;top:459px;width:101px;height:17px;background:#fff"></div>
<div class="a" style="left:290px;top:459px;width:1039px;height:17px;background:#f1f1f1"></div>
<div class="a" style="left:1329px;top:459px;width:18px;height:17px;background:#dcdcdc"></div>
<svg style="left:296px;top:464px" width="4" height="7" viewBox="0 0 4 7"><path d="M4 0 V7 L0 3.5Z" fill="#a3a3a3"/></svg>
<svg style="left:1319px;top:464px" width="4" height="7" viewBox="0 0 4 7"><path d="M0 0 V7 L4 3.5Z" fill="#505050"/></svg>
<div class="a" style="left:307px;top:461px;width:715px;height:13px;background:#c1c1c1"></div>
<div class="a" style="left:189px;top:476px;width:1158px;height:1px;background:#dcdcdc"></div>
<div class="a" style="left:189px;top:477px;width:1158px;height:25px;background:#f3f3f3"></div>
<div class="a" style="left:219px;top:477px;width:1px;height:25px;background:#d9d9d9"></div>
<div class="a" style="left:289px;top:477px;width:1px;height:25px;background:#d9d9d9"></div>
<div class="a" style="left:410px;top:477px;width:1px;height:25px;background:#d9d9d9"></div>
<div class="a" style="left:510px;top:477px;width:1px;height:25px;background:#d9d9d9"></div>
<div class="a" style="left:630px;top:477px;width:1px;height:25px;background:#d9d9d9"></div>
<div class="a" style="left:730px;top:477px;width:1px;height:25px;background:#d9d9d9"></div>
<div class="a" style="left:790px;top:477px;width:1px;height:25px;background:#d9d9d9"></div>
<div class="a" style="left:990px;top:477px;width:1px;height:25px;background:#d9d9d9"></div>
<div class="a" style="left:1055px;top:477px;width:1px;height:25px;background:#d9d9d9"></div>
<div class="a" style="left:1125px;top:477px;width:1px;height:25px;background:#d9d9d9"></div>
<div class="a" style="left:1215px;top:477px;width:1px;height:25px;background:#d9d9d9"></div>
<div class="a" style="left:1285px;top:477px;width:1px;height:25px;background:#d9d9d9"></div>
<div class="a" style="left:1329px;top:477px;width:1px;height:25px;background:#d9d9d9"></div>
<div class="t" style="left:1222.80px;top:484px;font-size:11.5px;color:#555;letter-spacing:-0.036px;font-weight:bold">7,900.00</div>
<div class="a" style="left:1286px;top:477px;width:43px;height:25px;overflow:hidden"><div class="t" style="left:6.70px;top:7px;font-size:11.5px;color:#555;letter-spacing:-0.036px;font-weight:bold">7,300.00</div>
</div>
<div class="t" style="left:188.40px;top:521px;font-size:12.5px;color:#666;letter-spacing:0.010px">Today Completed Procedures</div>
<div class="a" style="left:188px;top:536px;width:274px;height:1px;background:#e3e3e3"></div>
<div class="t" style="left:483.80px;top:521px;font-size:12.5px;color:#666;letter-spacing:-0.123px">Last Payment</div>
<div class="a" style="left:484px;top:536px;width:569px;height:1px;background:#e3e3e3"></div>
<div class="t" style="left:1075.00px;top:521px;font-size:12.5px;color:#666;letter-spacing:-0.275px">Balance</div>
<div class="a" style="left:1075px;top:536px;width:274px;height:1px;background:#e3e3e3"></div>
<div class="t" style="left:199.40px;top:559px;font-size:11.5px;color:#555;letter-spacing:-0.038px;-webkit-text-stroke:0.35px #555">Charges</div>
<div class="t" style="left:381.50px;top:559px;font-size:11.5px;color:#555;letter-spacing:-0.008px;-webkit-text-stroke:0.35px #555">0.00</div>
<div class="t" style="left:199.40px;top:586px;font-size:11.5px;color:#555;letter-spacing:0.321px;-webkit-text-stroke:0.35px #555">Patient Portion</div>
<div class="t" style="left:381.50px;top:586px;font-size:11.5px;color:#555;letter-spacing:-0.008px;-webkit-text-stroke:0.35px #555">0.00</div>
<div class="t" style="left:199.40px;top:613px;font-size:11.5px;color:#555;letter-spacing:0.301px;-webkit-text-stroke:0.35px #555">Insurance Portion</div>
<div class="t" style="left:381.50px;top:613px;font-size:11.5px;color:#555;letter-spacing:-0.008px;-webkit-text-stroke:0.35px #555">0.00</div>
<div class="t" style="left:494.90px;top:559px;font-size:11.5px;color:#555;letter-spacing:0.274px;-webkit-text-stroke:0.35px #555">Patient</div>
<div class="t" style="left:730.85px;top:559px;font-size:11.5px;color:#555;letter-spacing:0.037px;-webkit-text-stroke:0.35px #555">10.00</div>
<div class="t" style="left:826.50px;top:559px;font-size:11.5px;color:#555;letter-spacing:0.193px;-webkit-text-stroke:0.35px #555">Date</div>
<div class="t" style="left:874.00px;top:559px;font-size:11.5px;color:#555;letter-spacing:-0.052px;-webkit-text-stroke:0.35px #555">26/03/2019 3:31:08 PM</div>
<div class="t" style="left:494.90px;top:586px;font-size:11.5px;color:#555;letter-spacing:0.245px;-webkit-text-stroke:0.35px #555">Insurance</div>
<div class="t" style="left:730.85px;top:586px;font-size:11.5px;color:#555;letter-spacing:0.037px;-webkit-text-stroke:0.35px #555">50.00</div>
<div class="t" style="left:826.50px;top:586px;font-size:11.5px;color:#555;letter-spacing:0.193px;-webkit-text-stroke:0.35px #555">Date</div>
<div class="t" style="left:874.00px;top:586px;font-size:11.5px;color:#555;letter-spacing:-0.045px;-webkit-text-stroke:0.35px #555">09/12/2018 12:54:00 PM</div>
<div class="t" style="left:1086.00px;top:559px;font-size:11.5px;color:#555;letter-spacing:0.274px;-webkit-text-stroke:0.35px #555">Patient</div>
<div class="t" style="left:1245.00px;top:559px;font-size:11.5px;color:#555;letter-spacing:0.023px;-webkit-text-stroke:0.35px #555">1,440.00</div>
<div class="t" style="left:1086.00px;top:586px;font-size:11.5px;color:#555;letter-spacing:0.245px;-webkit-text-stroke:0.35px #555">Insurance</div>
<div class="t" style="left:1245.00px;top:586px;font-size:11.5px;color:#555;letter-spacing:0.064px;-webkit-text-stroke:0.35px #555">490.00</div>
<div class="t" style="left:1086.00px;top:613px;font-size:11.5px;color:#555;letter-spacing:0.071px;-webkit-text-stroke:0.35px #555">Family</div>
<div class="t" style="left:1245.00px;top:613px;font-size:11.5px;color:#555;letter-spacing:0.023px;-webkit-text-stroke:0.35px #555">1,930.00</div>
</body></html>
